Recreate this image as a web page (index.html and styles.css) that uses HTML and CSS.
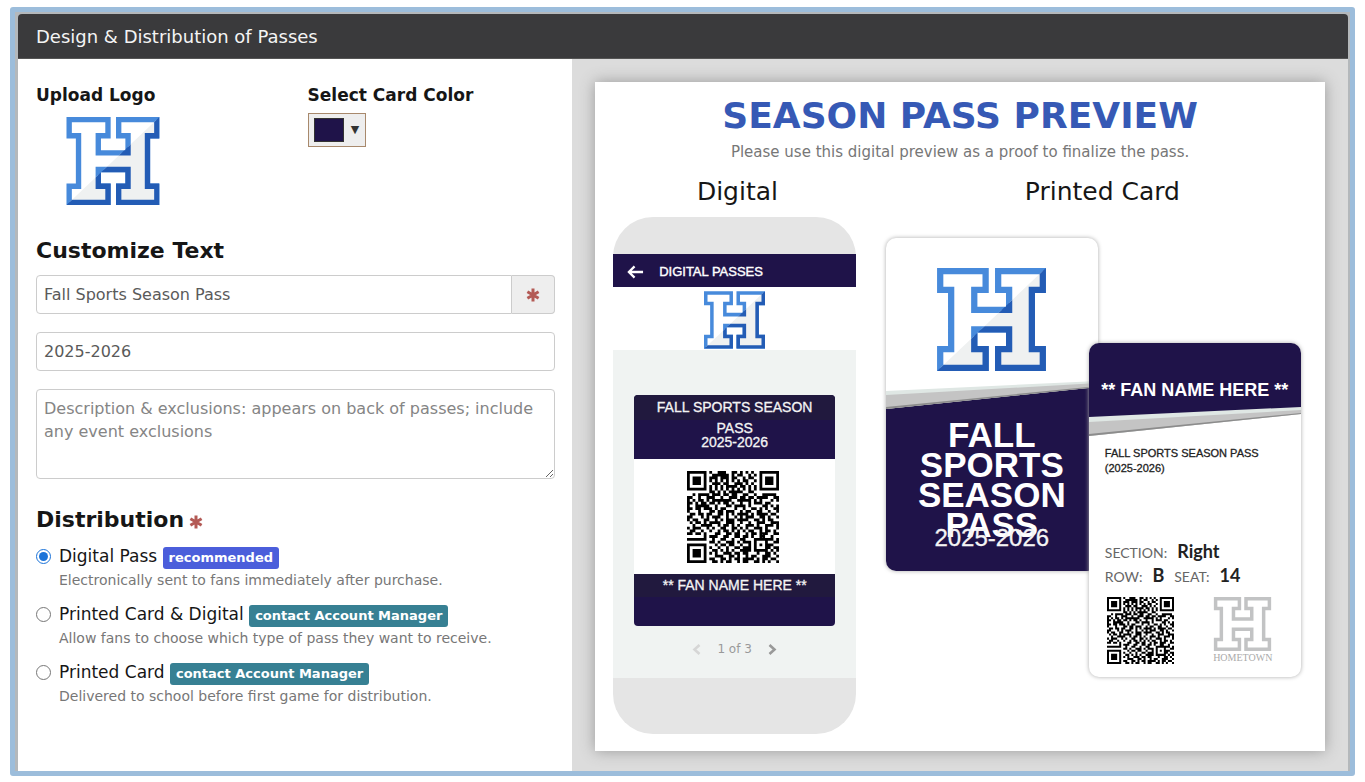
FILE: index.html
```html
<!DOCTYPE html>
<html lang="en">
<head>
<meta charset="utf-8">
<title>Design &amp; Distribution of Passes</title>
<link rel="stylesheet" href="styles.css">
</head>
<body>
<svg class="defs" aria-hidden="true">
  <defs>
    <clipPath id="shade"><path d="M278 0V263H0Z"/></clipPath>
    <path id="h-shape" d="M8 8H124V56H95V107H184V56H156V8H270V56H242V207H270V255H156V207H184V157H95V207H124V255H8V207H36V56H8Z"/>
    <symbol id="logo" viewBox="0 0 278 263">
      <use href="#h-shape" fill="#fff" stroke="#478adb" stroke-width="16"/>
      <g clip-path="url(#shade)"><use href="#h-shape" fill="#eff1f1" stroke="#235cb5" stroke-width="16"/></g>
    </symbol>
    <symbol id="logo-grey" viewBox="0 0 278 263">
      <use href="#h-shape" fill="#fff" stroke="#c2c3c4" stroke-width="17"/>
    </symbol>
    <symbol id="asterisk" viewBox="0 0 14 14">
      <path d="M7 .5V13.500M1.400 3.800L12.600 10.200M12.600 3.800L1.400 10.200" stroke="#b35a55" stroke-width="3"/>
    </symbol>
    <symbol id="qr" viewBox="0 0 33 33"><path id="qr-path" d="" shape-rendering="geometricPrecision"/></symbol>
  </defs>
</svg>

<div class="frame">
  <header class="title-bar"><h1>Design &amp; Distribution of Passes</h1></header>
  <main class="columns">
    <form class="settings">
      <div class="top-row">
        <div>
          <h2 class="label">Upload Logo</h2>
          <svg class="upload-logo" role="img" aria-label="School logo"><use href="#logo"/></svg>
        </div>
        <div>
          <h2 class="label" id="color-label">Select Card Color</h2>
          <button type="button" class="color-button" aria-labelledby="color-label"><span class="swatch"></span><span class="caret">▼</span></button>
        </div>
      </div>

      <h2 class="section-title">Customize Text</h2>
      <div class="input-group">
        <input type="text" aria-label="Pass name" value="Fall Sports Season Pass">
        <span class="addon"><svg class="asterisk"><use href="#asterisk"/></svg></span>
      </div>
      <input type="text" class="field" aria-label="Pass year" value="2025-2026">
      <textarea class="field description" aria-label="Description and exclusions" placeholder="Description &amp; exclusions: appears on back of passes; include any event exclusions"></textarea>

      <h2 class="section-title">Distribution <svg class="asterisk"><use href="#asterisk"/></svg></h2>
      <div class="option">
        <input type="radio" name="dist" id="d1" checked>
        <label for="d1">Digital Pass <span class="badge blue">recommended</span></label>
        <p>Electronically sent to fans immediately after purchase.</p>
      </div>
      <div class="option">
        <input type="radio" name="dist" id="d2">
        <label for="d2">Printed Card &amp; Digital <span class="badge teal">contact Account Manager</span></label>
        <p>Allow fans to choose which type of pass they want to receive.</p>
      </div>
      <div class="option">
        <input type="radio" name="dist" id="d3">
        <label for="d3">Printed Card <span class="badge teal">contact Account Manager</span></label>
        <p>Delivered to school before first game for distribution.</p>
      </div>
    </form>

    <section class="preview-area">
      <div class="preview">
        <h2 class="preview-title">SEASON PASS PREVIEW</h2>
        <p class="preview-note">Please use this digital preview as a proof to finalize the pass.</p>
        <div class="preview-columns">
          <div class="digital">
            <h3>Digital</h3>
            <div class="phone">
              <div class="phone-bar">
                <svg class="back" viewBox="0 0 18 14"><path d="M17 7H2M8 1L2 7L8 13" fill="none" stroke="#fff" stroke-width="2.4"/></svg>
                <span>DIGITAL PASSES</span>
              </div>
              <div class="phone-logo"><svg><use href="#logo"/></svg></div>
              <div class="phone-body">
                <div class="ticket">
                  <div class="ticket-top">
                    <p class="strip">FALL SPORTS SEASON</p>
                    <p>PASS</p>
                    <p>2025-2026</p>
                  </div>
                  <div class="ticket-code"><svg role="img" aria-label="QR code"><use href="#qr"/></svg></div>
                  <div class="ticket-foot"><p class="strip">** FAN NAME HERE **</p></div>
                </div>
                <div class="pager">
                  <button type="button" class="prev" aria-label="Previous"><svg viewBox="0 0 9 11"><path d="M7.5 1L2.5 5.500L7.500 10" fill="none" stroke="currentColor" stroke-width="2.600"/></svg></button>
                  <span>1 of 3</span>
                  <button type="button" class="next" aria-label="Next"><svg viewBox="0 0 9 11"><path d="M1.500 1L6.500 5.500L1.500 10" fill="none" stroke="currentColor" stroke-width="2.600"/></svg></button>
                </div>
              </div>
            </div>
          </div>
          <div class="printed">
            <h3>Printed Card</h3>
            <div class="cards">
              <article class="card front">
                <div class="front-logo"><svg><use href="#logo"/></svg></div>
                <svg class="swoosh" viewBox="0 0 212 29" preserveAspectRatio="none">
                  <path d="M0 29V26L212 5V29Z" fill="#1f1349"/>
                  <path d="M0 10L212 0V6L0 28Z" fill="#dfe7e4"/>
                  <path d="M0 14L212 2V6L0 28Z" fill="#c4c4c4"/>
                  <path d="M0 26L212 5V6L0 28Z" fill="#8c8c8c"/>
                </svg>
                <div class="front-text">
                  <p class="pass-name">FALL SPORTS SEASON PASS</p>
                  <p class="pass-year">2025-2026</p>
                </div>
              </article>
              <article class="card rear">
                <div class="rear-head">** FAN NAME HERE **</div>
                <svg class="swoosh" viewBox="0 0 212 30" preserveAspectRatio="none">
                  <path d="M0 0H212V2L0 12Z" fill="#1f1349"/>
                  <path d="M0 10L212 0V7L0 29Z" fill="#dfe7e4"/>
                  <path d="M0 15L212 3V7L0 29Z" fill="#c4c4c4"/>
                  <path d="M0 27L212 6V7L0 29Z" fill="#8c8c8c"/>
                </svg>
                <div class="rear-body">
                  <p class="rear-name">FALL SPORTS SEASON PASS<br>(2025-2026)</p>
                  <p class="seat"><span>SECTION:</span><b>Right</b></p>
                  <p class="seat"><span>ROW:</span><b>B</b><span>SEAT:</span><b>14</b></p>
                  <div class="rear-foot">
                    <svg class="small-qr" role="img" aria-label="QR code"><use href="#qr"/></svg>
                    <div class="brand"><svg><use href="#logo-grey"/></svg><span>HOMETOWN</span></div>
                  </div>
                </div>
              </article>
            </div>
          </div>
        </div>
      </div>
    </section>
  </main>
</div>
<script src="qr.js"></script>
</body>
</html>
```
FILE: qr.js
```js
// Module map of the pass code, one string per row: # is a dark module.
const rows = [
  "#######.#..###..##.#.#.#..#######",
  "#.....#..######.#.##..#.#.#.....#",
  "#.###.#.###.###.##..#.##..#.###.#",
  "#.###.#.#.#.#.#.#.#.##..#.#.###.#",
  "#.###.#..###.##..###.#.#..#.###.#",
  "#.....#.#.#.#.####.##.#.#.#.....#",
  "#######.#.#.#.#.#.#.#.#.#.#######",
  "........##.#.#.#####..##.........",
  "..#.####.###.##.##..##..#..#####.",
  "##..#..###..#..###.##.##.####..##",
  "#.#.##.#.#######..#####.#.#...#.#",
  "##.#.##.##.#.##.#..#..#.###.##...",
  "#..#####..#...##.####.#....##.#.#",
  "##.##.###.#.##...#..#..##.#.#..##",
  "#...#...##.##.###..#.##..##..#..#",
  ".##.##.##..##.#.#.####.#.####.##.",
  "##...#.#.###..#..#.#.###..##.#..#",
  "#.##..##..#.#.###.####..##.#.##..",
  ".#.##.#.####..###..#..#..###..###",
  "..#..####..#.##.#.#..###.#..###.#",
  "#.###..#.#..##..##.#.#..###.#...#",
  ".##..#..#..#.##.#.#.#.##..#.##.#.",
  "##.##.#...##..##.##..#.##.###..##",
  "......#.###..##..##.##.#..##..#..",
  "#######..#..##..#..##...#######.#",
  "........##.#..###.#.###.#...#..##",
  "#######...#.##.##..#..#.#.#.###..",
  "#.....#.#..#..#..##.###.#...##.##",
  "#.###.#..##.#.#.#..####.#####.#.#",
  "#.###.#.#.#..###.##.##...#..##.#.",
  "#.###.#...###..##.#..#.##..###..#",
  "#.....#.##..##.#.##.####.#.##.##.",
  "#######..##.#.##..#.##..##.#.#..#"
];
document.getElementById("qr-path").setAttribute("d",
  rows.map((row, y) => [...row].map((c, x) => c === "#" ? `M${x} ${y}h1v1h-1z` : "").join("")).join(""));
```
FILE: styles.css
```css
* { box-sizing: border-box; }
body {
  margin: 0;
  min-height: 100vh;
  padding: 7px 10px 6px;
  display: flex;
  background: #fff;
  color: #161616;
  font-family: "DejaVu Sans", Verdana, sans-serif;
  font-size: 16px;
}
h1, h2, h3, p { margin: 0; }
.defs { position: absolute; width: 0; height: 0; }

.frame {
  flex: 1;
  display: flex;
  flex-direction: column;
  border: 5px solid #9cbddb;
  border-radius: 3px;
  padding: 2px 2px 0 3px;
  background: #b4b8bb;
}
.title-bar {
  padding: 2px 18px 0;
  background: #3a3a3c;
  border-bottom: 1px solid #555;
  border-radius: 4px 4px 0 0;
}
.title-bar h1 {
  font-size: 18px;
  font-weight: 400;
  line-height: 42px;
  color: #f4f4f4;
}
.columns {
  flex: 1;
  display: grid;
  grid-template-columns: 5fr 7fr;
}

.settings { background: #fff; padding: 24px 17px 0 18px; }
.top-row {
  display: grid;
  grid-template-columns: 1fr 1fr;
  gap: 24px;
  margin-bottom: 32px;
}
.label { font-size: 17px; line-height: 24px; }
.upload-logo { display: block; width: 94px; height: 88px; margin: 10px 0 0 30px; }
.color-button {
  display: flex;
  align-items: center;
  gap: 7px;
  margin-top: 6px;
  padding: 4px 5px;
  border: 1px solid #a8896c;
  background: #eee;
}
.swatch { width: 30px; height: 24px; background: #1f1349; border: 1px solid #333; }
.caret { width: 9px; font: 11px/24px "DejaVu Sans", sans-serif; color: #333; }

.section-title { font-size: 22px; line-height: 28px; margin-bottom: 10px; }
.section-title .asterisk { margin-left: -3px; vertical-align: -2px; }
.asterisk { width: 14px; height: 14px; }
input[type="text"], .field {
  display: block;
  width: 100%;
  height: 39px;
  padding: 0 7px;
  border: 1px solid #ccc;
  border-radius: 4px;
  background: #fff;
  color: #5a5a5a;
  font: 16px/23px "DejaVu Sans", Verdana, sans-serif;
}
.input-group { display: flex; margin-bottom: 18px; }
.input-group input { flex: 1; border-radius: 4px 0 0 4px; }
.addon {
  width: 43px;
  display: grid;
  place-items: center;
  border: 1px solid #ccc;
  border-left: 0;
  border-radius: 0 4px 4px 0;
  background: #eee;
}
.settings .description { height: 90px; margin: 18px 0 27px; padding: 7px; }
.description::placeholder { color: #858585; }

.option {
  display: grid;
  grid-template-columns: 15px 1fr;
  column-gap: 8px;
  align-items: center;
  margin-bottom: 11px;
}
.option input { width: 15px; height: 15px; margin: 0; accent-color: #1a73d9; }
.option label { font-size: 17px; line-height: 24px; }
.option p { grid-column: 2; font-size: 14px; line-height: 22px; color: #777; }
.badge {
  display: inline-block;
  padding: 0 6px;
  border-radius: 3px;
  color: #fff;
  font-size: 13px;
  font-weight: 700;
  line-height: 22px;
}
.blue { background: #4b5edb; }
.teal { background: #378093; }

.preview-area { display: flex; padding: 23px 23px 20px; background: #dcdcdc; }
.preview { flex: 1; background: #fff; box-shadow: 0 0 14px #999; }
.preview-title {
  padding-top: 12px;
  text-align: center;
  color: #3659b5;
  font-size: 36px;
  line-height: 44px;
}
.preview-note { text-align: center; color: #777; font-size: 15px; line-height: 28px; }
.preview-columns { display: grid; grid-template-columns: 39% 61%; margin-top: 6px; }
h3 { text-align: center; font-size: 25px; font-weight: 400; line-height: 40px; }

.phone {
  width: 243px;
  margin: 5px 0 0 18px;
  padding: 37px 0 56px;
  border-radius: 40px;
  background: #e5e5e5;
  font-family: "Liberation Sans", Arial, sans-serif;
}
.phone-bar {
  display: flex;
  align-items: center;
  gap: 15px;
  height: 33px;
  padding: 2px 14px 0;
  background: #1f1349;
  color: #fff;
  font-size: 13px;
  -webkit-text-stroke: 0.4px #fff;
}
.back { width: 17px; height: 14px; }
.phone-logo { display: flex; justify-content: center; padding: 4px 0 1px; background: #fff; }
.phone-logo svg { width: 61px; height: 58px; }
.phone-body { padding: 45px 21px 17px; background: #f0f3f2; }
.ticket {
  border-radius: 4px;
  overflow: hidden;
  text-align: center;
  color: #f4f4f4;
  font-size: 14px;
  line-height: 14px;
  -webkit-text-stroke: 0.3px #f4f4f4;
}
.ticket-top { padding-bottom: 10px; background: #1f1349; }
.ticket .strip { line-height: 25px; background: #21193e; }
.ticket-top .strip { margin-bottom: 1px; }
.ticket-code { display: flex; justify-content: center; padding: 12px 4px 11px 0; background: #fff; }
.ticket-code svg { width: 92px; height: 92px; }
.ticket-foot { padding-bottom: 29px; background: #1f1349; }
.ticket-foot .strip { line-height: 23px; }
.pager {
  display: flex;
  justify-content: center;
  align-items: center;
  gap: 16px;
  margin-top: 11px;
  color: #999;
  font: 12px/24px "DejaVu Sans", sans-serif;
}
.pager button { display: flex; padding: 0; border: 0; background: none; color: #999; }
.pager .prev { color: #d6d6d6; }
.pager svg { width: 9px; height: 11px; }

.cards {
  display: flex;
  align-items: flex-start;
  margin: 26px 0 0 6px;
  font-family: "Liberation Sans", Arial, sans-serif;
}
.card {
  width: 212px;
  border-radius: 10px;
  overflow: hidden;
  background: #fff;
  box-shadow: 0 0 4px #aaa;
}
.swoosh { display: block; width: 100%; }
.front .swoosh { height: 29px; }
.front-logo { display: flex; justify-content: center; padding: 30px 0 10px; }
.front-logo svg { width: 109px; height: 103px; }
.front-text { padding: 10px 28px 20px; background: #1f1349; color: #fff; text-align: center; }
.pass-name { font-size: 35px; font-weight: 700; line-height: 30px; }
.pass-year { margin-top: -15px; font-size: 24px; line-height: 26px; color: #f4f4f4; -webkit-text-stroke: 0.3px #f4f4f4; }
.rear { margin: 105px 0 0 -9px; position: relative; }
.rear-head {
  height: 64px;
  background: #1f1349;
  color: #fff;
  text-align: center;
  font-size: 18px;
  font-weight: 700;
  line-height: 22px;
  padding-top: 36px;
}
.rear .swoosh { height: 30px; }
.rear-body { padding: 9px 16px 13px; }
.rear-name { margin-bottom: 64px; font-size: 11px; line-height: 15px; color: #222; -webkit-text-stroke: 0.3px #222; }
.seat { display: flex; align-items: baseline; gap: 10px; font-family: Lato, sans-serif; line-height: 22px; }
.seat span { font-size: 14px; color: #666; }
.seat b { font-size: 18px; color: #222; }
.rear-foot { display: flex; justify-content: space-between; margin: 9px 11px 0 2px; }
.small-qr { width: 67px; height: 67px; }
.brand { display: flex; flex-direction: column; align-items: center; gap: 1px; width: 62px; height: 67px; }
.brand svg { width: 61px; height: 58px; }
.brand span { font: 10px/12px "Liberation Serif", serif; color: #aaa; }
```
